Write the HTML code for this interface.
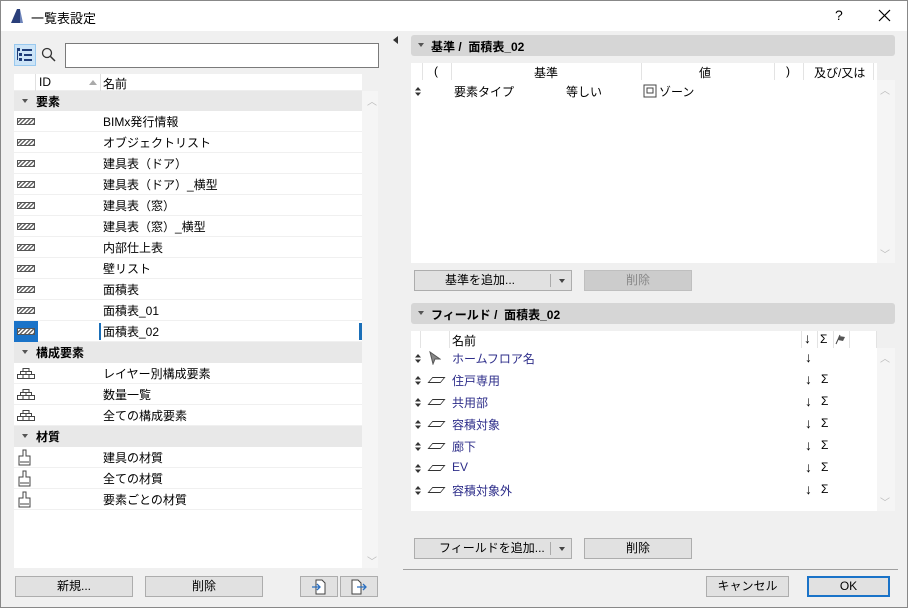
<!DOCTYPE html>
<html><head><meta charset="utf-8"><style>
*{box-sizing:border-box;margin:0;padding:0}
body{width:908px;height:608px;background:#f0f0f0;font-family:"Liberation Sans","Noto Sans CJK JP",sans-serif;font-size:12px;color:#000;position:relative;overflow:hidden}
.a{position:absolute}
.win{left:0;top:0;width:908px;height:608px;border:1px solid #888}
.title{left:1px;top:1px;width:906px;height:30px;background:#fff}
.btn{position:absolute;background:#e1e1e1;border:1px solid #adadad;text-align:center;line-height:19px;height:21px}
.row{position:absolute;left:14px;width:348px;height:21px;background:#fff;border-bottom:1px solid #f0f0f0}
.row span{position:absolute;left:89px;top:2px}
.grp{position:absolute;left:14px;width:348px;height:21px;background:#e8e8e8;font-weight:bold}
.grp span{position:absolute;left:22px;top:2px}
.grp i{position:absolute;left:8px;top:8px;width:0;height:0;border-left:3px solid transparent;border-right:3px solid transparent;border-top:4px solid #555}
.hatch{position:absolute;left:3px;top:7px;width:18px;height:7px;border:1px solid #555;background:repeating-linear-gradient(135deg,#fff 0 1.5px,#666 1.5px 3px)}
.hdr{position:absolute;background:#d6d6d6;border-radius:3px;font-weight:bold;height:21px}
.hdr span{position:absolute;left:20px;top:3px}
.hdr i{position:absolute;left:7px;top:8px;width:0;height:0;border-left:3px solid transparent;border-right:3px solid transparent;border-top:4px solid #555}
.fr{position:absolute;left:411px;width:466px;height:22px}
.fr .n{position:absolute;left:41px;top:3px;color:#2e2e8a}
.fr .d{position:absolute;left:394px;top:2px;font-size:14px}
.fr .g{position:absolute;left:410px;top:3px}
.para{position:absolute;left:19px;top:8px;width:13px;height:6px;border:1px solid #333;transform:skewX(-40deg)}
.sa{position:absolute;left:4px;top:7px}
</style></head><body>
<div class="a win"></div>
<div class="a title"></div>
<svg class="a" style="left:10px;top:8px" width="14" height="16"><path d="M1 15 L7 1 L10 1 L10 15 Z" fill="#2a3f7a"/><path d="M10 1 L13 15 L10 15Z" fill="#6b82b8"/></svg>
<div class="a" style="left:31px;top:8px;font-size:13px">一覧表設定</div>
<div class="a" style="left:835px;top:7px;font-size:14px">?</div>
<svg class="a" style="left:878px;top:9px" width="13" height="13"><path d="M1 1L12 12M12 1L1 12" stroke="#000" stroke-width="1.2"/></svg>

<div class="a" style="left:14px;top:44px;width:22px;height:22px;background:#cce4f7;border:1px solid #99c9ef"></div>
<svg class="a" style="left:17px;top:48px" width="16" height="14"><g fill="#1e3c78"><rect x="0" y="0" width="3" height="3"/><rect x="5" y="1" width="10" height="2"/><rect x="2" y="5" width="3" height="3"/><rect x="7" y="6" width="8" height="2"/><rect x="2" y="10" width="3" height="3"/><rect x="7" y="11" width="8" height="2"/><rect x="0" y="3" width="1" height="9"/></g></svg>
<svg class="a" style="left:41px;top:47px" width="16" height="16"><circle cx="6" cy="6" r="4.5" fill="none" stroke="#333" stroke-width="1.3"/><path d="M9.5 9.5 L14 14" stroke="#333" stroke-width="1.5"/></svg>
<div class="a" style="left:65px;top:43px;width:314px;height:25px;background:#fff;border:1px solid #7a7a7a"></div>

<div class="a" style="left:14px;top:74px;width:348px;height:494px;background:#fff"></div>
<div class="a" style="left:362px;top:91px;width:16px;height:477px;background:#f5f5f5"></div>
<div class="a" style="left:367px;top:93px;color:#bbb;font-size:10px">︿</div>
<div class="a" style="left:367px;top:553px;color:#bbb;font-size:10px">﹀</div>
<div class="a" style="left:14px;top:74px;width:348px;height:17px;background:#fff;border-bottom:1px solid #eee"></div>
<div class="a" style="left:35px;top:74px;width:1px;height:17px;background:#e0e0e0"></div>
<div class="a" style="left:100px;top:74px;width:1px;height:17px;background:#e0e0e0"></div>
<div class="a" style="left:39px;top:75px">ID</div>
<div class="a" style="left:89px;top:80px;width:0;height:0;border-left:4px solid transparent;border-right:4px solid transparent;border-bottom:5px solid #aaa"></div>
<div class="a" style="left:103px;top:75px">名前</div>

<div class="grp" style="top:91px"><i></i><span>要素</span></div>
<div class="row" style="top:111px"><div class="hatch"></div><span>BIMx発行情報</span></div>
<div class="row" style="top:132px"><div class="hatch"></div><span>オブジェクトリスト</span></div>
<div class="row" style="top:153px"><div class="hatch"></div><span>建具表（ドア）</span></div>
<div class="row" style="top:174px"><div class="hatch"></div><span>建具表（ドア）_横型</span></div>
<div class="row" style="top:195px"><div class="hatch"></div><span>建具表（窓）</span></div>
<div class="row" style="top:216px"><div class="hatch"></div><span>建具表（窓）_横型</span></div>
<div class="row" style="top:237px"><div class="hatch"></div><span>内部仕上表</span></div>
<div class="row" style="top:258px"><div class="hatch"></div><span>壁リスト</span></div>
<div class="row" style="top:279px"><div class="hatch"></div><span>面積表</span></div>
<div class="row" style="top:300px"><div class="hatch"></div><span>面積表_01</span></div>
<div class="row" style="top:321px"><div class="a" style="left:0;top:0;width:24px;height:21px;background:#1a73c8"></div><div class="hatch"></div><div class="a" style="left:85px;top:2px;width:2px;height:17px;background:#1a6fb8"></div><span>面積表_02</span><div class="a" style="left:345px;top:2px;width:3px;height:17px;background:#1a6fb8"></div></div>
<div class="grp" style="top:342px"><i></i><span>構成要素</span></div>
<div class="row" style="top:363px"><svg class="a" style="left:3px;top:5px" width="18" height="11"><path d="M6 .5h6v3H6zM3.5 3.5h11v3h-11zM.5 6.5h17v4H.5zM9 3.5v3M6 6.5v4M12 6.5v4" fill="none" stroke="#444"/></svg><span>レイヤー別構成要素</span></div>
<div class="row" style="top:384px"><svg class="a" style="left:3px;top:5px" width="18" height="11"><path d="M6 .5h6v3H6zM3.5 3.5h11v3h-11zM.5 6.5h17v4H.5zM9 3.5v3M6 6.5v4M12 6.5v4" fill="none" stroke="#444"/></svg><span>数量一覧</span></div>
<div class="row" style="top:405px"><svg class="a" style="left:3px;top:5px" width="18" height="11"><path d="M6 .5h6v3H6zM3.5 3.5h11v3h-11zM.5 6.5h17v4H.5zM9 3.5v3M6 6.5v4M12 6.5v4" fill="none" stroke="#444"/></svg><span>全ての構成要素</span></div>
<div class="grp" style="top:426px"><i></i><span>材質</span></div>
<div class="row" style="top:447px"><svg class="a" style="left:3px;top:2px" width="16" height="18"><path d="M6 1h3v6h4v9H2V7h4z" fill="none" stroke="#444"/><path d="M3 13h9" stroke="#444"/></svg><span>建具の材質</span></div>
<div class="row" style="top:468px"><svg class="a" style="left:3px;top:2px" width="16" height="18"><path d="M6 1h3v6h4v9H2V7h4z" fill="none" stroke="#444"/><path d="M3 13h9" stroke="#444"/></svg><span>全ての材質</span></div>
<div class="row" style="top:489px"><svg class="a" style="left:3px;top:2px" width="16" height="18"><path d="M6 1h3v6h4v9H2V7h4z" fill="none" stroke="#444"/><path d="M3 13h9" stroke="#444"/></svg><span>要素ごとの材質</span></div>

<div class="btn" style="left:15px;top:576px;width:118px">新規...</div>
<div class="btn" style="left:145px;top:576px;width:118px">削除</div>
<div class="btn" style="left:300px;top:576px;width:38px"><svg width="16" height="16" style="margin-top:2px"><path d="M5 1h6l3 3v11H5z" fill="#fff" stroke="#444"/><path d="M1 8h8M6 5l3 3-3 3" fill="none" stroke="#2a6fc0" stroke-width="1.3"/></svg></div>
<div class="btn" style="left:340px;top:576px;width:38px"><svg width="18" height="16" style="margin-top:2px"><path d="M2 1h6l3 3v11H2z" fill="#fff" stroke="#444"/><path d="M7 8h9M13 5l3 3-3 3" fill="none" stroke="#2a6fc0" stroke-width="1.3"/></svg></div>

<div class="a" style="left:393px;top:36px;width:0;height:0;border-top:4px solid transparent;border-bottom:4px solid transparent;border-right:5px solid #333"></div>

<div class="hdr" style="left:411px;top:35px;width:484px"><i></i><span>基準 /&nbsp; 面積表_02</span></div>
<div class="a" style="left:411px;top:63px;width:466px;height:200px;background:#fff"></div>
<div class="a" style="left:877px;top:80px;width:18px;height:183px;background:#f5f5f5"></div>
<div class="a" style="left:880px;top:82px;color:#bbb;font-size:10px">︿</div>
<div class="a" style="left:880px;top:246px;color:#bbb;font-size:10px">﹀</div>
<div class="a" style="left:422px;top:63px;width:1px;height:17px;background:#e3e3e3"></div>
<div class="a" style="left:451px;top:63px;width:1px;height:17px;background:#e3e3e3"></div>
<div class="a" style="left:641px;top:63px;width:1px;height:17px;background:#e3e3e3"></div>
<div class="a" style="left:774px;top:63px;width:1px;height:17px;background:#e3e3e3"></div>
<div class="a" style="left:803px;top:63px;width:1px;height:17px;background:#e3e3e3"></div>
<div class="a" style="left:873px;top:63px;width:1px;height:17px;background:#e3e3e3"></div>
<div class="a" style="left:434px;top:64px">(</div>
<div class="a" style="left:534px;top:64px">基準</div>
<div class="a" style="left:699px;top:64px">値</div>
<div class="a" style="left:786px;top:64px">)</div>
<div class="a" style="left:814px;top:64px">及び/又は</div>
<svg class="a" style="left:415px;top:87px" width="6" height="9"><path d="M0 3.5L3 0 6 3.5zM0 5.5L3 9 6 5.5z" fill="#333"/></svg>
<div class="a" style="left:454px;top:83px">要素タイプ</div>
<div class="a" style="left:566px;top:83px">等しい</div>
<svg class="a" style="left:643px;top:84px" width="14" height="14"><path d="M1 1h12v12H1zM4 4h6v5H4z" fill="none" stroke="#444"/></svg>
<div class="a" style="left:659px;top:83px">ゾーン</div>

<div class="btn" style="left:414px;top:270px;width:158px;text-align:left;padding-left:30px">基準を追加...<span class="a" style="left:135px;top:3px;width:1px;height:13px;background:#aaa"></span><span class="a" style="left:144px;top:8px;border-left:3px solid transparent;border-right:3px solid transparent;border-top:4px solid #444"></span></div>
<div class="btn" style="left:584px;top:270px;width:108px;background:#ccc;border-color:#bfbfbf;color:#888">削除</div>

<div class="hdr" style="left:411px;top:303px;width:484px"><i></i><span>フィールド /&nbsp; 面積表_02</span></div>
<div class="a" style="left:411px;top:331px;width:466px;height:180px;background:#fff"></div>
<div class="a" style="left:877px;top:348px;width:18px;height:163px;background:#f5f5f5"></div>
<div class="a" style="left:880px;top:350px;color:#bbb;font-size:10px">︿</div>
<div class="a" style="left:880px;top:494px;color:#bbb;font-size:10px">﹀</div>
<div class="a" style="left:420px;top:331px;width:1px;height:17px;background:#e3e3e3"></div>
<div class="a" style="left:449px;top:331px;width:1px;height:17px;background:#e3e3e3"></div>
<div class="a" style="left:801px;top:331px;width:1px;height:17px;background:#e3e3e3"></div>
<div class="a" style="left:817px;top:331px;width:1px;height:17px;background:#e3e3e3"></div>
<div class="a" style="left:833px;top:331px;width:1px;height:17px;background:#e3e3e3"></div>
<div class="a" style="left:849px;top:331px;width:1px;height:17px;background:#e3e3e3"></div>
<div class="a" style="left:876px;top:331px;width:1px;height:17px;background:#e3e3e3"></div>
<div class="a" style="left:452px;top:332px">名前</div>
<div class="a" style="left:804px;top:330px;font-size:14px">↓</div>
<div class="a" style="left:820px;top:332px">Σ</div>
<svg class="a" style="left:835px;top:333px" width="12" height="12"><path d="M1 11L5 2" stroke="#444"/><path d="M4 3l6 1-2 4-5-1z" fill="#555"/></svg>

<div class="fr" style="top:347px"><svg class="sa" width="6" height="9"><path d="M0 3.5L3 0 6 3.5zM0 5.5L3 9 6 5.5z" fill="#333"/></svg><svg class="a" style="left:18px;top:4px" width="12" height="14"><path d="M1 1L11 8 6 8 4 13z" fill="#888" stroke="#555"/></svg><span class="n">ホームフロア名</span><span class="d">↓</span></div>
<div class="fr" style="top:369px"><svg class="sa" width="6" height="9"><path d="M0 3.5L3 0 6 3.5zM0 5.5L3 9 6 5.5z" fill="#333"/></svg><div class="para"></div><span class="n">住戸専用</span><span class="d">↓</span><span class="g">Σ</span></div>
<div class="fr" style="top:391px"><svg class="sa" width="6" height="9"><path d="M0 3.5L3 0 6 3.5zM0 5.5L3 9 6 5.5z" fill="#333"/></svg><div class="para"></div><span class="n">共用部</span><span class="d">↓</span><span class="g">Σ</span></div>
<div class="fr" style="top:413px"><svg class="sa" width="6" height="9"><path d="M0 3.5L3 0 6 3.5zM0 5.5L3 9 6 5.5z" fill="#333"/></svg><div class="para"></div><span class="n">容積対象</span><span class="d">↓</span><span class="g">Σ</span></div>
<div class="fr" style="top:435px"><svg class="sa" width="6" height="9"><path d="M0 3.5L3 0 6 3.5zM0 5.5L3 9 6 5.5z" fill="#333"/></svg><div class="para"></div><span class="n">廊下</span><span class="d">↓</span><span class="g">Σ</span></div>
<div class="fr" style="top:457px"><svg class="sa" width="6" height="9"><path d="M0 3.5L3 0 6 3.5zM0 5.5L3 9 6 5.5z" fill="#333"/></svg><div class="para"></div><span class="n">EV</span><span class="d">↓</span><span class="g">Σ</span></div>
<div class="fr" style="top:479px"><svg class="sa" width="6" height="9"><path d="M0 3.5L3 0 6 3.5zM0 5.5L3 9 6 5.5z" fill="#333"/></svg><div class="para"></div><span class="n">容積対象外</span><span class="d">↓</span><span class="g">Σ</span></div>

<div class="btn" style="left:414px;top:538px;width:158px;text-align:left;padding-left:24px">フィールドを追加...<span class="a" style="left:135px;top:3px;width:1px;height:13px;background:#aaa"></span><span class="a" style="left:144px;top:8px;border-left:3px solid transparent;border-right:3px solid transparent;border-top:4px solid #444"></span></div>
<div class="btn" style="left:584px;top:538px;width:108px">削除</div>

<div class="a" style="left:403px;top:569px;width:495px;height:1px;background:#a0a0a0"></div>
<div class="btn" style="left:706px;top:576px;width:83px">キャンセル</div>
<div class="btn" style="left:807px;top:576px;width:83px;border:2px solid #1a73c8;line-height:17px">OK</div>
</body></html>
